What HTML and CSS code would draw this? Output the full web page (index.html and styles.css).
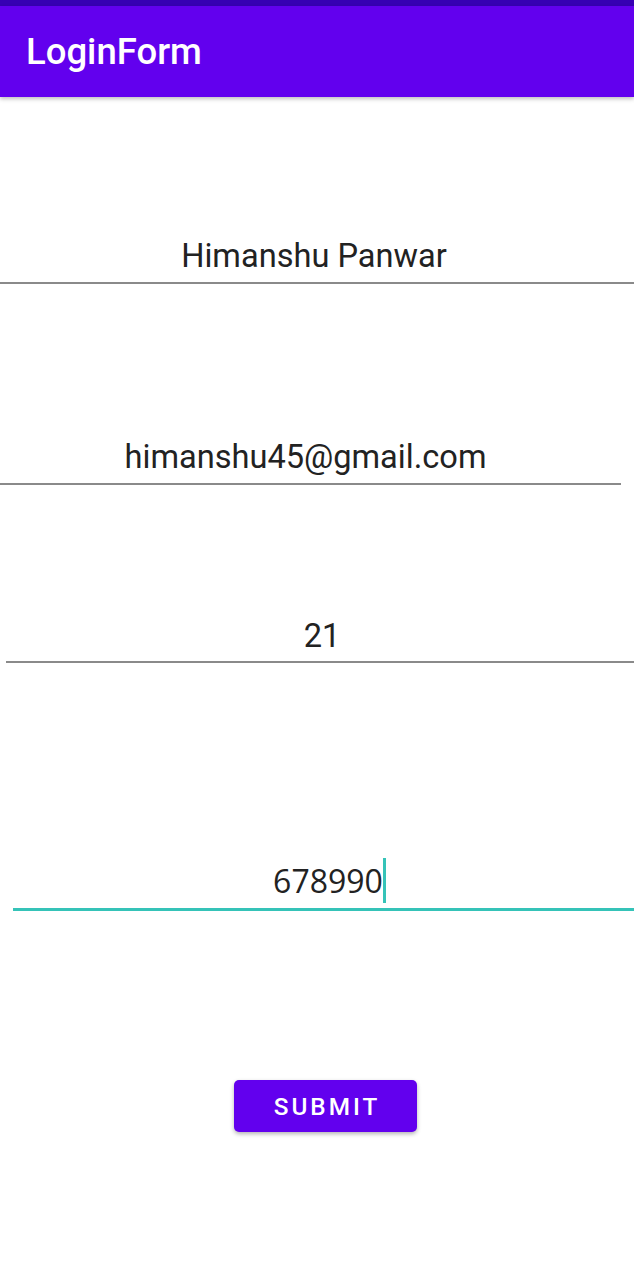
FILE: index.html
```html
<!DOCTYPE html>
<html lang="en">
<head>
  <meta charset="UTF-8">
  <meta name="viewport" content="width=device-width, initial-scale=1.0">
  <title>LoginForm</title>
  <link rel="stylesheet" href="styles.css">
</head>
<body>
  <div class="status-bar"></div>
  <header class="app-bar">
    <h1>LoginForm</h1>
  </header>

  <main class="form">
    <!-- Name -->
    <div class="field field-name">Himanshu Panwar</div>

    <!-- Email -->
    <div class="field field-email">himanshu45@gmail.com</div>

    <!-- Age -->
    <div class="field field-age">21</div>

    <!-- Phone (focused) -->
    <div class="field field-phone focused">678990<span class="cursor"></span></div>

    <button type="button" class="submit">SUBMIT</button>
  </main>
</body>
</html>
```

FILE: styles.css
```css
body {
  margin: 0;
  font-family: Roboto, "Noto Sans", sans-serif;
  background: #fff;
  color: #222;
  width: 634px;
  height: 1280px;
  overflow: hidden;
}
.status-bar {
  height: 6px;
  background-color: #3700b3;
}
.app-bar {
  height: 91px;
  background-color: #6200ee;
  display: flex;
  align-items: center;
  padding-left: 26px;
  box-shadow: 0 2px 4px rgba(0, 0, 0, 0.25);
  position: relative;
}
.app-bar h1 {
  margin: 0;
  color: #fff;
  font-size: 36.5px;
  font-weight: 500;
}
.form {
  display: flex;
  flex-direction: column;
  align-items: stretch;
}
.field {
  font-size: 32.6px;
  line-height: 40px;
  text-align: center;
  border-bottom: 2px solid #8a8a8a;
}
.field-name {
  margin-top: 139px;
  padding-bottom: 6px;
  padding-right: 6px;
}
.field-email {
  margin-top: 153px;
  padding-bottom: 6px;
  padding-right: 10px;
  margin-right: 13px;
}
.field-age {
  margin-top: 131px;
  padding-bottom: 5px;
  padding-left: 4px;
  margin-left: 6px;
}
.field-phone {
  margin-top: 195px;
  margin-left: 13px;
  padding-bottom: 5px;
  font-family: "Open Sans", "Noto Sans", sans-serif;
  font-size: 32px;
  line-height: 44px;
  padding-left: 12px;
}
.focused {
  border-bottom: 3px solid #35c3b8;
}
.cursor {
  display: inline-block;
  width: 3px;
  height: 45px;
  background-color: #35c3b8;
  vertical-align: -10px;
}
.submit {
  align-self: center;
  margin-top: 169px;
  margin-left: 17px;
  width: 183px;
  height: 52px;
  border: none;
  border-radius: 5px;
  background-color: #6200ee;
  color: #fff;
  font-family: Roboto, sans-serif;
  font-size: 24.3px;
  font-weight: 500;
  letter-spacing: 3px;
  padding-left: 9px;
  box-shadow: 0 2px 4px rgba(0, 0, 0, 0.3);
  cursor: pointer;
}
```
